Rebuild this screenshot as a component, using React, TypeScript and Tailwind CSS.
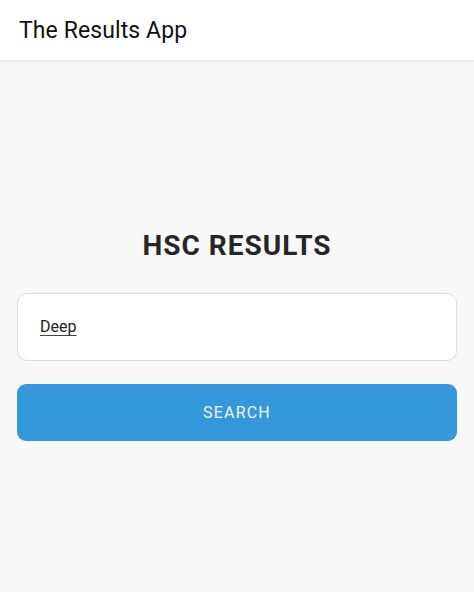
import { useState } from "react";

export default function App() {
  const [name, setName] = useState("Deep");

  return (
    <div className="min-h-[592px] bg-[#f8f8f8] font-['Roboto',sans-serif] text-[#1c1c1c]">
      <header className="flex h-[61px] items-center border-b border-[#ebebeb] bg-white px-[19px] shadow-[0_1px_3px_rgba(0,0,0,0.06)]">
        <h1 className="text-[23px] leading-none tracking-[0.1px] text-[#111]">The Results App</h1>
      </header>

      <main className="flex flex-col px-[17px] pt-[168px]">
        <h2 className="text-center text-[28px] font-bold leading-[34px] tracking-[1px] text-[#262626]">
          HSC RESULTS
        </h2>

        <div className="mt-[30px] flex h-[68px] items-center rounded-[10px] border border-[#dcdcdc] bg-white px-[22px]">
          <input
            value={name}
            onChange={(e) => setName(e.target.value)}
            className="w-full bg-transparent text-[16px] text-[#222] underline decoration-[#444] underline-offset-[3px] outline-none"
          />
        </div>

        <button className="mt-[23px] h-[57px] rounded-[9px] bg-[#3498db] text-[16px] tracking-[1.2px] text-[#eaf5fd]">
          SEARCH
        </button>
      </main>
    </div>
  );
}
